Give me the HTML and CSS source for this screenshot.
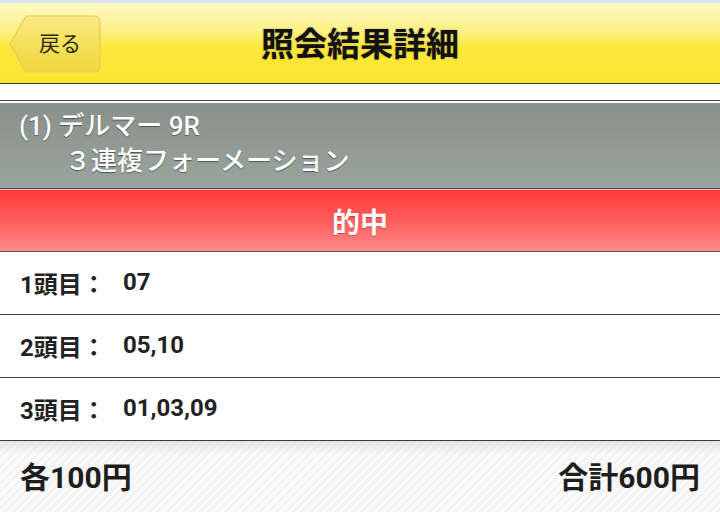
FILE: index.html
```html
<!DOCTYPE html>
<html lang="ja">
<head>
<meta charset="utf-8">
<link rel="stylesheet" href="styles.css">
</head>
<body>
<div class="topstrip"></div>
<header class="header">
  <a class="back">
    <svg class="back-shape" viewBox="0 0 92 58" width="92" height="58">
      <defs>
        <linearGradient id="bg" x1="0" y1="0" x2="0" y2="1">
          <stop offset="0" stop-color="#fbeb86"/>
          <stop offset="0.5" stop-color="#f6e05a"/>
          <stop offset="1" stop-color="#f1d63c"/>
        </linearGradient>
      </defs>
      <path d="M17 1 H85 Q91 1 91 7 V51 Q91 57 85 57 H17 L1 29 Z" fill="url(#bg)" stroke="#e3cc5a" stroke-width="1.2"/>
    </svg>
    <span class="back-label">戻る</span>
  </a>
  <h1 class="title">照会結果詳細</h1>
</header>
<div class="spacer"></div>
<section class="race">
  <div class="race-line">(1) デルマー 9R</div>
  <div class="race-line race-type">３連複フォーメーション</div>
</section>
<div class="result">的中</div>
<ul class="picks">
  <li class="pick"><span class="pick-label">1頭目：</span><span class="pick-value">07</span></li>
  <li class="pick"><span class="pick-label">2頭目：</span><span class="pick-value">05,10</span></li>
  <li class="pick"><span class="pick-label">3頭目：</span><span class="pick-value">01,03,09</span></li>
</ul>
<footer class="footer">
  <span class="amount">各100円</span>
  <span class="amount">合計600円</span>
</footer>
</body>
</html>
```

FILE: styles.css
```css
html, body {
  margin: 0;
  padding: 0;
}
body {
  width: 720px;
  height: 512px;
  overflow: hidden;
  background: #fff;
  font-family: "Roboto", "Noto Sans CJK JP", sans-serif;
  color: #222;
}
.topstrip {
  height: 3px;
  background: #dfe5ec;
}
.header {
  position: relative;
  height: 80px;
  border-bottom: 1px solid #3a3a2a;
  background: linear-gradient(to bottom, #fff9c8 0%, #fdf084 35%, #fce83c 55%, #fde52e 100%);
  display: flex;
  align-items: center;
  justify-content: center;
}
.back {
  position: absolute;
  left: 9px;
  top: 12px;
  width: 92px;
  height: 58px;
  display: flex;
  align-items: center;
  justify-content: center;
}
.back-shape {
  position: absolute;
  left: 0;
  top: 0;
}
.back-label {
  position: relative;
  font-family: "Noto Sans CJK JP", sans-serif;
  font-size: 21px;
  color: #2a2a1a;
  padding-left: 10px;
  margin-top: -4px;
}
.title {
  margin: 0;
  font-family: "Noto Sans CJK JP", sans-serif;
  font-size: 33px;
  font-weight: bold;
  color: #111;
  text-shadow: 0 0 2px rgba(0,0,0,0.35);
  line-height: 1;
  margin-top: -1px;
}
.spacer {
  height: 16px;
}
.race {
  border-top: 1px solid #444;
  border-bottom: 1px solid #5a4646;
  height: 89px;
  box-sizing: border-box;
  background: linear-gradient(to bottom, #fff 0, #fff 2px, #8a908b 2px, #9aa49e 100%);
  color: #fff;
  text-shadow: 0 1px 1px rgba(0,0,0,0.45);
  font-size: 26px;
  font-weight: 500;
}
.race-line {
  padding-left: 19px;
  line-height: 35px;
}
.race-line:first-child {
  margin-top: 8px;
}
.race-type {
  padding-left: 65px;
}
.result {
  height: 63px;
  box-sizing: border-box;
  border-top: 1px solid #f4c6c6;
  border-bottom: 1px solid #555;
  background: linear-gradient(to bottom, #ff3a3a 0%, #ff5c5c 50%, #ff8a8a 100%);
  color: #fff;
  font-family: "Noto Sans CJK JP", sans-serif;
  font-size: 28px;
  font-weight: bold;
  text-shadow: 0 1px 1px rgba(120,0,0,0.35);
  display: flex;
  align-items: center;
  justify-content: center;
}
.picks {
  list-style: none;
  margin: 0;
  padding: 0;
}
.pick {
  height: 62px;
  border-bottom: 1px solid #3c3c3c;
  display: flex;
  align-items: center;
  padding-left: 20px;
  font-size: 24px;
  font-weight: bold;
  color: #222;
}
.pick-label {
  width: 103px;
  margin-top: -2px;
}
.pick-value {
  margin-top: -2px;
}
.footer {
  height: 71px;
  box-sizing: border-box;
  display: flex;
  align-items: center;
  justify-content: space-between;
  padding: 0 20px 3px;
  background:
    linear-gradient(to bottom, rgba(220,220,220,0.7) 0, rgba(240,240,240,0) 14px),
    repeating-linear-gradient(-45deg, #f3f3f3 0, #f3f3f3 3px, #fbfbfb 3px, #fbfbfb 6px);
}
.amount {
  font-size: 30px;
  font-weight: bold;
  color: #1e1e1e;
}
```
